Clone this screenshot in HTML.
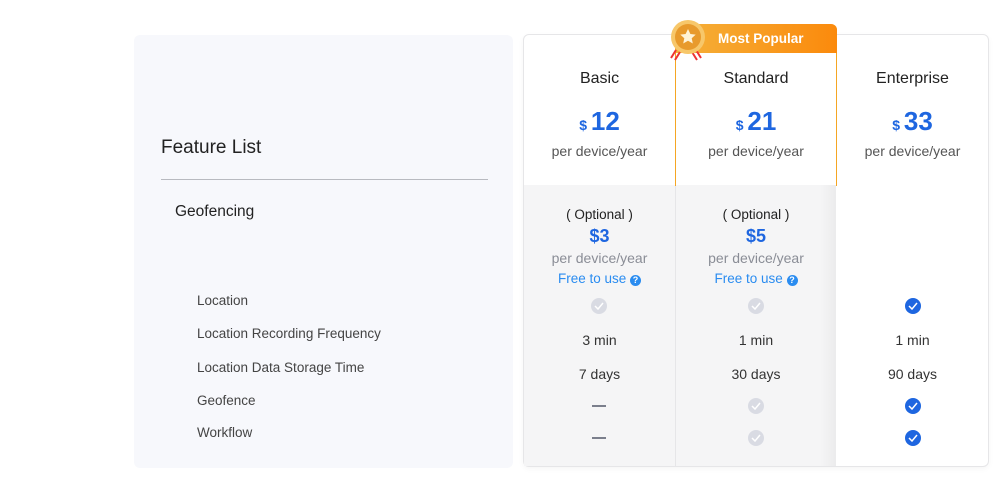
<!DOCTYPE html>
<html><head><style>
*{margin:0;padding:0;box-sizing:border-box}
body{width:1000px;height:490px;background:#fff;font-family:"Liberation Sans",sans-serif;position:relative;overflow:hidden;color:#333}
.a{position:absolute}
.c{position:absolute;text-align:center}
.lbl{position:absolute;left:197px;font-size:13.5px;color:#444}
.chk{position:absolute;width:16px;height:16px;border-radius:50%}
.g{background:#d9dbe3}.b{background:#1e66e0}
.chk svg{position:absolute;left:3px;top:4px}
.dash{position:absolute;width:14px;height:2px;background:#7b7f8c}
.t{font-size:14px}
</style></head><body>
<div class="a" style="left:134px;top:35px;width:379px;height:433px;background:#f7f8fc;border-radius:6px"></div>
<div class="a" style="left:161px;top:137px;font-size:19px;color:#222">Feature List</div>
<div class="a" style="left:161px;top:179px;width:327px;height:1px;background:#b8bac0"></div>
<div class="a" style="left:175px;top:203px;font-size:15.5px;color:#222">Geofencing</div>
<div class="lbl" style="top:293px">Location</div>
<div class="lbl" style="top:326px">Location Recording Frequency</div>
<div class="lbl" style="top:360px">Location Data Storage Time</div>
<div class="lbl" style="top:393px">Geofence</div>
<div class="lbl" style="top:425px">Workflow</div>

<div class="a" style="left:523px;top:34px;width:466px;height:433px;border:1px solid #e6e6e8;border-radius:6px;background:#fff;box-shadow:0 2px 6px rgba(0,0,0,0.04)"></div>
<div class="a" style="left:524px;top:185px;width:312px;height:281px;background:#f5f5f6"></div>
<div class="a" style="left:675px;top:185px;width:1px;height:281px;background:#e6e6e8"></div>
<div class="a" style="left:820px;top:185px;width:16px;height:281px;background:linear-gradient(90deg,rgba(0,0,0,0),rgba(0,0,0,0.04))"></div>
<div class="a" style="left:675px;top:24px;width:162px;height:162px;border:1px solid #f5a623;border-top:none;border-bottom:none;border-radius:6px 6px 0 0"></div>
<div class="a" style="left:675px;top:24px;width:162px;height:29px;background:linear-gradient(90deg,#f5b13a,#fb8a0c);border-radius:6px 6px 0 0"></div>
<div class="a" style="left:718px;top:31px;font-size:13.5px;font-weight:bold;color:#fff">Most Popular</div>
<svg class="a" style="left:666px;top:17px" width="44" height="46" viewBox="0 0 44 46">
<path d="M10 33 L5 41 M14 35 L9 43 M30 33 L35 41 M26 35 L31 43" stroke="#e33" stroke-width="2"/>
<circle cx="22" cy="20" r="17" fill="#f7c76a"/>
<circle cx="22" cy="20" r="13" fill="#e89a2c"/>
<path d="M22 12 l2.4 5 5.3.6-4 3.6 1.1 5.3-4.8-2.7-4.8 2.7 1.1-5.3-4-3.6 5.3-.6z" fill="#fff3d6"/>
</svg>

<div class="c" style="left:523px;width:153px;top:70px;font-size:16px;color:#222">Basic</div>
<div class="c" style="left:676px;width:160px;top:70px;font-size:16px;color:#222">Standard</div>
<div class="c" style="left:836px;width:153px;top:70px;font-size:16px;color:#222">Enterprise</div>
<div class="c" style="left:523px;width:153px;top:106px;color:#1e66e0;font-weight:bold"><span style="font-size:14px">$ </span><span style="font-size:26px">12</span></div>
<div class="c" style="left:676px;width:160px;top:106px;color:#1e66e0;font-weight:bold"><span style="font-size:14px">$ </span><span style="font-size:26px">21</span></div>
<div class="c" style="left:836px;width:153px;top:106px;color:#1e66e0;font-weight:bold"><span style="font-size:14px">$ </span><span style="font-size:26px">33</span></div>
<div class="c t" style="left:523px;width:153px;top:143px;color:#555">per device/year</div>
<div class="c t" style="left:676px;width:160px;top:143px;color:#555">per device/year</div>
<div class="c t" style="left:836px;width:153px;top:143px;color:#555">per device/year</div>

<div class="c" style="left:523px;width:153px;top:207px;font-size:13.5px;color:#222">( Optional )</div>
<div class="c" style="left:676px;width:160px;top:207px;font-size:13.5px;color:#222">( Optional )</div>
<div class="c" style="left:523px;width:153px;top:226px;font-size:18px;font-weight:bold;color:#1e66e0">$3</div>
<div class="c" style="left:676px;width:160px;top:226px;font-size:18px;font-weight:bold;color:#1e66e0">$5</div>
<div class="c t" style="left:523px;width:153px;top:250px;color:#8a8d96">per device/year</div>
<div class="c t" style="left:676px;width:160px;top:250px;color:#8a8d96">per device/year</div>
<div class="c" style="left:523px;width:153px;top:271px;font-size:13.5px;color:#2a8cf0">Free to use <span style="display:inline-block;width:11px;height:11px;border-radius:50%;background:#2a8cf0;color:#fff;font-size:9px;line-height:11px;font-weight:bold;vertical-align:0">?</span></div>
<div class="c" style="left:676px;width:160px;top:271px;font-size:13.5px;color:#2a8cf0">Free to use <span style="display:inline-block;width:11px;height:11px;border-radius:50%;background:#2a8cf0;color:#fff;font-size:9px;line-height:11px;font-weight:bold;vertical-align:0">?</span></div>

<div class="chk g" style="left:591px;top:298px"><svg width="10" height="8"><path d="M1 4 L4 7 L9 1" stroke="#fff" stroke-width="1.5" fill="none"/></svg></div>
<div class="chk g" style="left:748px;top:298px"><svg width="10" height="8"><path d="M1 4 L4 7 L9 1" stroke="#fff" stroke-width="1.5" fill="none"/></svg></div>
<div class="chk b" style="left:905px;top:298px"><svg width="10" height="8"><path d="M1 4 L4 7 L9 1" stroke="#fff" stroke-width="1.5" fill="none"/></svg></div>
<div class="c t" style="left:523px;width:153px;top:332px;color:#333">3 min</div>
<div class="c t" style="left:676px;width:160px;top:332px;color:#333">1 min</div>
<div class="c t" style="left:836px;width:153px;top:332px;color:#333">1 min</div>
<div class="c t" style="left:523px;width:153px;top:366px;color:#333">7 days</div>
<div class="c t" style="left:676px;width:160px;top:366px;color:#333">30 days</div>
<div class="c t" style="left:836px;width:153px;top:366px;color:#333">90 days</div>
<div class="dash" style="left:592px;top:405px"></div>
<div class="chk g" style="left:748px;top:398px"><svg width="10" height="8"><path d="M1 4 L4 7 L9 1" stroke="#fff" stroke-width="1.5" fill="none"/></svg></div>
<div class="chk b" style="left:905px;top:398px"><svg width="10" height="8"><path d="M1 4 L4 7 L9 1" stroke="#fff" stroke-width="1.5" fill="none"/></svg></div>
<div class="dash" style="left:592px;top:437px"></div>
<div class="chk g" style="left:748px;top:430px"><svg width="10" height="8"><path d="M1 4 L4 7 L9 1" stroke="#fff" stroke-width="1.5" fill="none"/></svg></div>
<div class="chk b" style="left:905px;top:430px"><svg width="10" height="8"><path d="M1 4 L4 7 L9 1" stroke="#fff" stroke-width="1.5" fill="none"/></svg></div>
</body></html>
